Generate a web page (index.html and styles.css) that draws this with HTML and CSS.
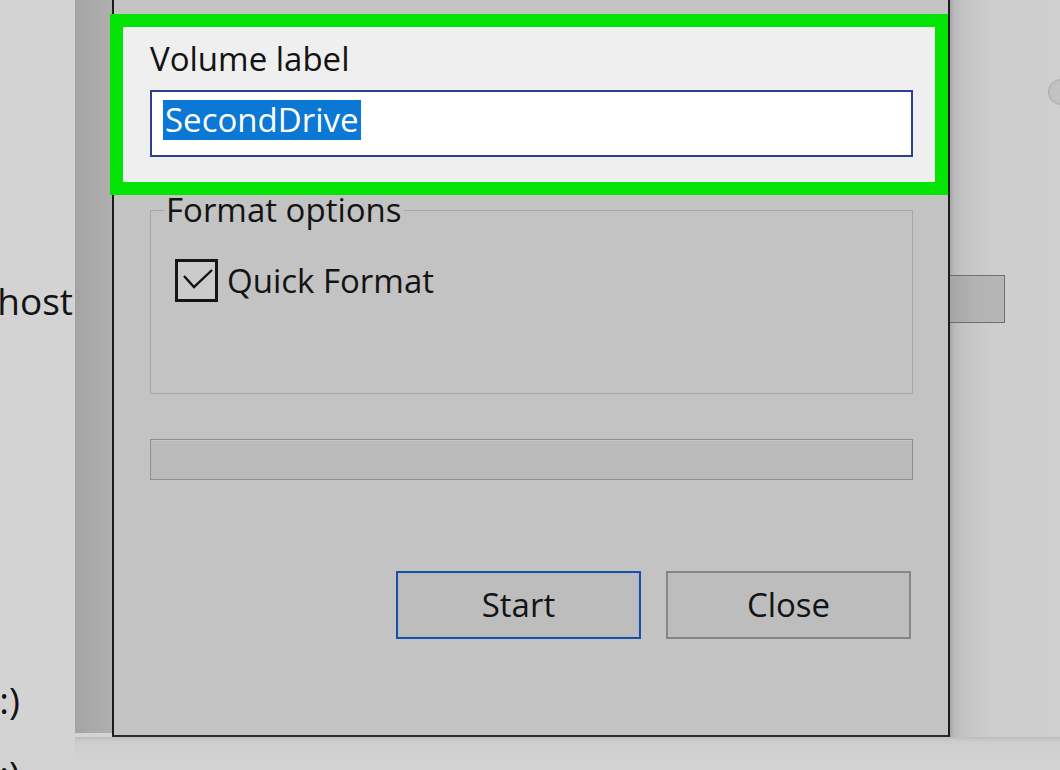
FILE: index.html
```html
<!DOCTYPE html>
<html lang="en">
<head>
<meta charset="utf-8">
<title>Format SecondDrive</title>
<link rel="stylesheet" href="styles.css">
</head>
<body>
<div class="screen">
  <aside class="nav">
    <div class="nav-item nav-host"><span>localhost</span></div>
    <div class="nav-item nav-c"><span>Local Disk (C:)</span></div>
    <div class="nav-item nav-d"><span>Local Disk (D:)</span></div>
  </aside>

  <div class="shade"></div>

  <section class="dialog">
    <div class="volume">
      <div class="field-label">Volume label</div>
      <div class="textbox"><span class="selection">SecondDrive</span></div>
    </div>

    <fieldset class="options">
      <legend>Format options</legend>
      <label class="check-row">
        <span class="checkbox">
          <svg width="37" height="37" viewBox="0 0 37 37" aria-hidden="true">
            <polyline points="6,14 16,25 34,8" fill="none" stroke="#121212" stroke-width="2.4" stroke-linejoin="miter"/>
          </svg>
        </span>
        <span class="check-text">Quick Format</span>
      </label>
    </fieldset>

    <div class="progress"></div>

    <div class="actions">
      <button class="btn btn-default">Start</button>
      <button class="btn">Close</button>
    </div>
  </section>

  <div class="backdrop">
    <span class="knob"></span>
    <span class="under-button"></span>
  </div>

  <div class="floor"></div>
</div>
</body>
</html>
```

FILE: styles.css
```css
* {
  box-sizing: border-box;
}

html,
body {
  margin: 0;
  padding: 0;
  background: #d3d3d3;
}

body {
  font-family: "Open Sans", "Noto Sans", "Liberation Sans", sans-serif;
  font-size: 33px;
  color: #131313;
}

.screen {
  display: grid;
  grid-template-columns: 75px 37px 838px 1fr;
  grid-template-rows: 737px 33px;
  width: 1060px;
  height: 770px;
  overflow: hidden;
}

/* explorer tree on the left, scrolled so only the ends of the names show */
.nav {
  grid-column: 1;
  grid-row: 1 / 3;
  background: #d3d3d3;
  padding-top: 279px;
  overflow: hidden;
  font-size: 37px;
}

.nav-item {
  display: flex;
  justify-content: flex-end;
  height: 44px;
  line-height: 44px;
  white-space: nowrap;
}

.nav-host {
  padding-right: 2px;
}

.nav-c {
  margin-top: 355px;
  padding-right: 55px;
}

.nav-d {
  margin-top: 30px;
  padding-right: 55px;
}

.shade {
  grid-column: 2;
  grid-row: 1;
  height: 733px;
  background: linear-gradient(to right, #a3a3a3 0, #a9a9a9 40%, #afafaf 100%);
}

/* the format dialog */
.dialog {
  grid-column: 3;
  grid-row: 1;
  background: #c3c3c3;
  border-left: 2px solid #1c1c1c;
  border-right: 2px solid #1c1c1c;
  border-bottom: 2px solid #2a2a2a;
  padding: 14px 35px 0 36px;
}

.volume {
  margin: 0 -35px 0 -40px;
  border: 13px solid #04e404;
  background: #efefef;
  padding: 12px 22px 25px 27px;
}

.field-label {
  line-height: 40px;
  height: 40px;
}

.textbox {
  margin-top: 11px;
  height: 67px;
  background: #fff;
  border: 2px solid #2b418c;
  padding: 5px 0 0 11px;
}

.selection {
  display: inline-block;
  height: 40px;
  line-height: 40px;
  padding: 0 2px;
  background: #0a78d4;
  color: #fff;
}

.options {
  margin: -2px 0 0;
  min-width: 0;
  padding: 32px 0 91px 24px;
  border: 1px solid #a7a7a7;
}

.options legend {
  margin-left: -11px;
  padding: 0 2px;
  line-height: 34px;
}

.check-row {
  display: flex;
  align-items: center;
  gap: 9px;
  height: 43px;
}

.checkbox {
  display: block;
  width: 43px;
  height: 43px;
  border: 3px solid #151515;
  background: #cbcbcb;
}

.checkbox svg {
  display: block;
}

.check-text {
  line-height: 40px;
}

.progress {
  margin-top: 45px;
  height: 41px;
  background: #bababa;
  border: 1px solid #8e8e8e;
  box-shadow: inset 0 1px 0 #c6c6c6;
}

.actions {
  display: flex;
  justify-content: flex-end;
  gap: 25px;
  margin-top: 91px;
  padding-right: 2px;
}

.btn {
  width: 245px;
  height: 68px;
  margin: 0;
  padding: 0;
  font: inherit;
  line-height: 40px;
  color: #131313;
  background: #bdbdbd;
  border: 2px solid #868686;
}

.btn-default {
  border-color: #1c4ea2;
  box-shadow: inset 0 0 0 1px #aab9d2;
}

/* window content visible to the right of the dialog */
.backdrop {
  grid-column: 4;
  grid-row: 1;
  display: flex;
  flex-direction: column;
  background: linear-gradient(to right, #a6a6a6 0, #b9b9b9 4px, #c3c3c3 12px, #c8c8c8 24px, #cecece 45px, #cfcfcf 100%);
}

.knob {
  align-self: flex-end;
  width: 26px;
  height: 26px;
  margin: 79px -14px 0 0;
  border-radius: 50%;
  background: #c2c2c2;
  border: 1px solid #a9a9a9;
}

.under-button {
  width: 55px;
  height: 48px;
  margin-top: 170px;
  border: 1px solid #6f6f6f;
  border-left: none;
  background: linear-gradient(to right, #a4a4a4 0, #b2b2b2 40%, #b6b6b6 100%);
}

.floor {
  grid-column: 2 / 5;
  grid-row: 2;
  background: linear-gradient(to bottom, #bdbdbd 0, #cecece 5px, #d3d3d3 100%);
}
```
